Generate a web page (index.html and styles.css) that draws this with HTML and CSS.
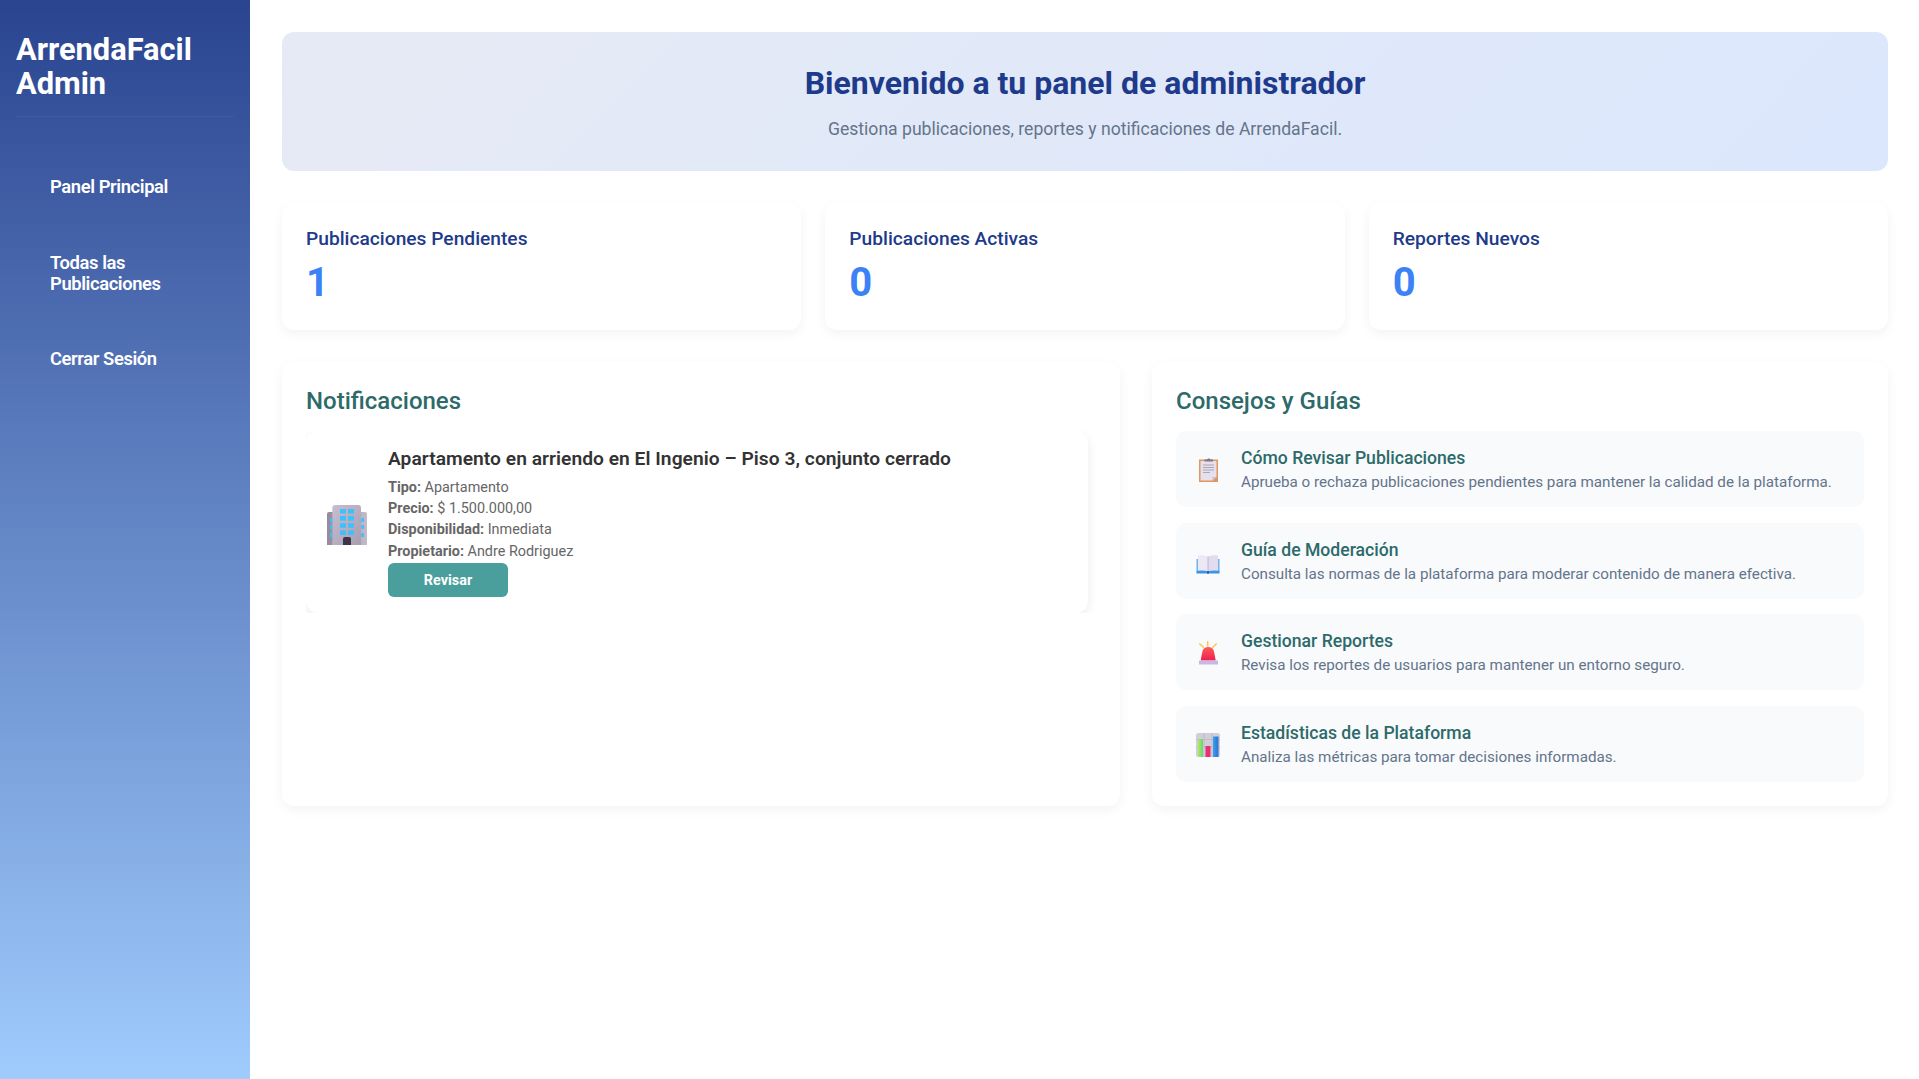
FILE: index.html
```html
<!DOCTYPE html>
<html lang="es">

<head>
    <meta charset="UTF-8">
    <meta name="viewport" content="width=device-width, initial-scale=1.0">
    <title>ArrendaFacil Admin</title>
    <link rel="stylesheet" href="styles.css">
</head>

<body>
    <aside class="sidebar">
        <h1 class="brand">ArrendaFacil Admin</h1>
        <nav class="nav">
            <a class="nav-link" href="#">Panel Principal</a>
            <a class="nav-link" href="#">Todas las Publicaciones</a>
            <a class="nav-link" href="#">Cerrar Sesión</a>
        </nav>
    </aside>

    <main class="content">
        <section class="welcome">
            <h2>Bienvenido a tu panel de administrador</h2>
            <p>Gestiona publicaciones, reportes y notificaciones de ArrendaFacil.</p>
        </section>

        <section class="stats">
            <div class="stat-card">
                <h3>Publicaciones Pendientes</h3>
                <p>1</p>
            </div>
            <div class="stat-card">
                <h3>Publicaciones Activas</h3>
                <p>0</p>
            </div>
            <div class="stat-card">
                <h3>Reportes Nuevos</h3>
                <p>0</p>
            </div>
        </section>

        <section class="columns">
            <div class="panel">
                <h3 class="panel-title">Notificaciones</h3>
                <div class="notification-list">
                    <div class="notification">
                        <svg class="notification-icon" viewBox="0 0 40 40">
                            <defs>
                                <linearGradient id="wall" x1="0" y1="0" x2="1" y2="1">
                                    <stop offset="0" stop-color="#c6bfd0" />
                                    <stop offset="1" stop-color="#a89eb3" />
                                </linearGradient>
                                <linearGradient id="wing" x1="0" y1="0" x2="1" y2="0">
                                    <stop offset="0" stop-color="#938b9d" />
                                    <stop offset="1" stop-color="#c2bbca" />
                                </linearGradient>
                            </defs>
                            <path d="M0 9q0-2 2-2h36q2 0 2 2v31H0z" fill="url(#wing)" />
                            <path d="M5.300 3q0-3 3-3h22.700q3 0 3 3v37H5.300z" fill="url(#wall)" />
                            <g fill="#3fc0fa">
                                <rect x="13" y="4" width="6" height="4.600" />
                                <rect x="21" y="4" width="6" height="4.600" />
                                <rect x="13" y="11" width="6" height="4.600" />
                                <rect x="21" y="11" width="6" height="4.600" />
                                <rect x="13" y="18.200" width="6" height="4.600" />
                                <rect x="21" y="18.200" width="6" height="4.600" />
                                <rect x="13" y="25.400" width="6" height="4.600" />
                                <rect x="21" y="25.400" width="6" height="4.600" />
                                <rect x="3" y="13" width="2.300" height="4" />
                                <rect x="3" y="20" width="2.300" height="4" />
                                <rect x="3" y="28" width="2.300" height="4" />
                                <rect x="34.300" y="13" width="2.700" height="4" />
                                <rect x="34.300" y="20" width="2.700" height="4" />
                                <rect x="34.300" y="28" width="2.700" height="4" />
                            </g>
                            <path d="M16 40v-6q0-2 2-2h4q2 0 2 2v6z" fill="#3f3447" />
                        </svg>
                        <div class="notification-body">
                            <h4>Apartamento en arriendo en El Ingenio – Piso 3, conjunto cerrado</h4>
                            <p><strong>Tipo:</strong> Apartamento</p>
                            <p><strong>Precio:</strong> $ 1.500.000,00</p>
                            <p><strong>Disponibilidad:</strong> Inmediata</p>
                            <p><strong>Propietario:</strong> Andre Rodriguez</p>
                            <button class="review-btn" type="button">Revisar</button>
                        </div>
                    </div>
                </div>
            </div>

            <div class="panel">
                <h3 class="panel-title">Consejos y Guías</h3>
                <div class="tips">
                    <div class="tip">
                        <svg class="tip-icon" viewBox="0 0 24 24">
                            <rect x="3" y="1.500" width="19" height="22.500" fill="#e0975f" />
                            <path d="M4.500 3h16v16l-4 3.500h-12z" fill="#e6e0ec" />
                            <path d="M16.500 22.500l4-3.500h-4z" fill="#c6bccf" />
                            <path d="M8.500 3.500V1.500h2.500l1-1h1.500l1 1h2.500v2z" fill="#7f7789" />
                            <path d="M7 7h11M7 9.500h11M7 12h11M7 14.500h7" stroke="#a79db1" stroke-width="0.900" fill="none" />
                        </svg>
                        <div>
                            <h4>Cómo Revisar Publicaciones</h4>
                            <p>Aprueba o rechaza publicaciones pendientes para mantener la calidad de la plataforma.</p>
                        </div>
                    </div>
                    <div class="tip">
                        <svg class="tip-icon" viewBox="0 0 24 24">
                            <path d="M0.500 9h23v13h-23z" fill="#6db3ef" />
                            <path d="M2 5.500q5-1 10 1v15q-5-2-10-1z" fill="#ece8f4" />
                            <path d="M22 5.500q-5-1-10 1v15q5-2 10-1z" fill="#e2dcee" />
                            <path d="M11.700 6.500h.6v15h-.6z" fill="#a69cc0" />
                            <path d="M0.500 21h23v2.500h-23z" fill="#3d94e6" />
                            <rect x="11" y="21.500" width="2" height="2" fill="#24508f" />
                        </svg>
                        <div>
                            <h4>Guía de Moderación</h4>
                            <p>Consulta las normas de la plataforma para moderar contenido de manera efectiva.</p>
                        </div>
                    </div>
                    <div class="tip">
                        <svg class="tip-icon" viewBox="0 0 24 24">
                            <defs>
                                <linearGradient id="siren" x1="0" y1="0" x2="0" y2="1">
                                    <stop offset="0" stop-color="#ff5a5a" />
                                    <stop offset="1" stop-color="#ee1f4f" />
                                </linearGradient>
                            </defs>
                            <path d="M11.700 0v5.500M3.300 2.500L8 6.800M20.700 2.500L16.300 6.800" stroke="#fbc748" stroke-width="1.400" fill="none" />
                            <path d="M4.700 19.500q1-6 2-10 1-3.500 5.500-3.500t5.500 3.500q1 4 2 10z" fill="url(#siren)" />
                            <path d="M3 19.500h19v4H3z" fill="#cbb8e2" />
                        </svg>
                        <div>
                            <h4>Gestionar Reportes</h4>
                            <p>Revisa los reportes de usuarios para mantener un entorno seguro.</p>
                        </div>
                    </div>
                    <div class="tip">
                        <svg class="tip-icon" viewBox="0 0 24 24">
                            <defs>
                                <linearGradient id="barGreen" x1="0" y1="0" x2="1" y2="0">
                                    <stop offset="0" stop-color="#b6e85a" />
                                    <stop offset="1" stop-color="#62d67c" />
                                </linearGradient>
                                <linearGradient id="barBlue" x1="0" y1="0" x2="1" y2="0">
                                    <stop offset="0" stop-color="#3aa0f0" />
                                    <stop offset="1" stop-color="#2a72d4" />
                                </linearGradient>
                            </defs>
                            <rect x="0" y="0" width="24" height="24" rx="2.500" fill="#d2ced9" />
                            <path d="M8 0v24M16 0v24M0 6.500h24M0 14h24" stroke="#bdb8c6" stroke-width="0.800" />
                            <rect x="2" y="6" width="5" height="18" fill="url(#barGreen)" />
                            <rect x="9.500" y="13" width="5" height="11" fill="#e8306f" />
                            <rect x="17" y="3.500" width="5.500" height="20.500" fill="url(#barBlue)" />
                        </svg>
                        <div>
                            <h4>Estadísticas de la Plataforma</h4>
                            <p>Analiza las métricas para tomar decisiones informadas.</p>
                        </div>
                    </div>
                </div>
            </div>
        </section>
    </main>
</body>

</html>
```

FILE: styles.css
```css
* {
    box-sizing: border-box;
}

body {
    font-family: Roboto, "Liberation Sans", sans-serif;
    margin: 0;
    min-height: 1079px;
    display: flex;
    background-color: #fff;
    color: #333;
}

.sidebar {
    width: 250px;
    flex-shrink: 0;
    padding: 16px;
    background: linear-gradient(180deg, #2a4490, #9fcbfd);
}

.brand {
    margin: 0;
    padding: 17px 0 15px;
    font-size: 30.8px;
    line-height: 34px;
    font-weight: 700;
    color: #fff;
    border-bottom: 1px solid rgba(255, 255, 255, 0.05);
}

.nav {
    display: flex;
    flex-direction: column;
    gap: 22.5px;
    margin-top: 43px;
}

.nav-link {
    display: block;
    padding: 16px 34px;
    font-size: 18.4px;
    line-height: 21px;
    font-weight: 600;
    letter-spacing: -0.4px;
    color: #fff;
    text-decoration: none;
}

.content {
    flex: 1;
    padding: 32px 31px 32px 32px;
    min-width: 0;
}

.welcome {
    height: 139px;
    padding-top: 30px;
    text-align: center;
    border-radius: 12px;
    background: linear-gradient(135deg, #e6eaf4, #dbe7fd);
}

.welcome h2 {
    margin: 0;
    font-size: 32px;
    line-height: 42px;
    font-weight: 700;
    color: #1e3a8a;
}

.welcome p {
    margin: 15px 0 0;
    font-size: 17.6px;
    line-height: 21px;
    color: #64748b;
}

.stats {
    display: grid;
    grid-template-columns: repeat(3, 1fr);
    gap: 24px;
    margin-top: 32px;
}

.stat-card {
    height: 127px;
    padding: 24px;
    background-color: #fff;
    border-radius: 12px;
    box-shadow: 0 4px 12px rgba(0, 0, 0, 0.05);
}

.stat-card h3 {
    margin: 0;
    font-size: 19.2px;
    line-height: 23px;
    font-weight: 500;
    color: #1e3a8a;
}

.stat-card p {
    margin: 9px 0 0;
    font-size: 40px;
    line-height: 47px;
    font-weight: 700;
    color: #3b82f6;
}

.columns {
    display: grid;
    grid-template-columns: 838px 1fr;
    gap: 32px;
    margin-top: 32px;
}

.panel {
    height: 444px;
    padding: 24px;
    background-color: #fff;
    border-radius: 12px;
    box-shadow: 0 4px 12px rgba(0, 0, 0, 0.05);
}

.panel-title {
    margin: 0 0 15px;
    font-size: 24px;
    line-height: 30px;
    font-weight: 500;
    color: #2d6a6a;
}

/* the list clips the card shadow everywhere but on the right */
.notification-list {
    overflow: hidden;
    padding-right: 12px;
}

.notification {
    display: flex;
    align-items: center;
    gap: 21px;
    width: 782px;
    height: 182px;
    padding: 0 21px;
    border-radius: 12px;
    box-shadow: 0 4px 12px rgba(0, 0, 0, 0.08);
}

.notification-icon {
    width: 40px;
    height: 40px;
    flex-shrink: 0;
    margin-top: 5px;
}

.notification-body h4 {
    margin: 0 0 7px;
    font-size: 19.2px;
    line-height: 23px;
    font-weight: 600;
    letter-spacing: 0.04px;
    color: #333;
}

.notification-body p {
    margin: 0;
    font-size: 14.4px;
    line-height: 21.3px;
    color: #666;
}

.notification-body strong {
    font-weight: 700;
}

.review-btn {
    display: block;
    width: 120px;
    height: 34px;
    margin-top: 1.5px;
    border: none;
    border-radius: 6px;
    background-color: #4a9e9c;
    color: #fff;
    font-family: inherit;
    font-size: 14.4px;
    font-weight: 700;
}

.tips {
    display: flex;
    flex-direction: column;
    gap: 15.7px;
}

.tip {
    display: flex;
    align-items: center;
    gap: 21px;
    height: 76px;
    padding: 2px 20px 0;
    border-radius: 10px;
    background-color: #f8fafc;
}

.tip-icon {
    width: 24px;
    height: 24px;
    flex-shrink: 0;
}

.tip h4 {
    margin: 0;
    font-size: 17.6px;
    line-height: 23px;
    font-weight: 500;
    color: #2d6a6a;
}

.tip p {
    margin: 1px 0 0;
    font-size: 15.2px;
    line-height: 22px;
    color: #64748b;
}
```
